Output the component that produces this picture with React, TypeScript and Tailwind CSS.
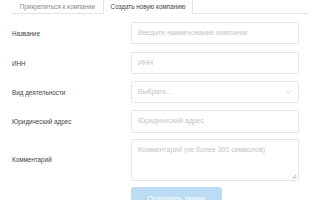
import { ChevronDown } from "lucide-react";

const fields = [
  { label: "Название", placeholder: "Введите наименование компании", mt: "mt-[8px]" },
  { label: "ИНН", placeholder: "ИНН", mt: "mt-[8px]" },
];

export default function App() {
  return (
    <div className="w-[320px] h-[200px] overflow-hidden bg-white px-3 text-[7px] text-[#444] font-['Liberation_Sans',Arial,sans-serif]">
      <div className="flex h-[14px] border-b border-[#e4e4e4] text-[6.3px]">
        <div className="w-[91px] flex items-start justify-center pt-[2px] text-[#888]">
          Прикрепиться к компании
        </div>
        <div className="w-[90px] -mb-px h-[14px] flex items-start justify-center pt-[2px] bg-white border-x border-[#e4e4e4] text-[#444]">
          Создать новую компанию
        </div>
      </div>

      {fields.map((f) => (
        <div key={f.label} className={`flex items-start ${f.mt}`}>
          <div className="w-[119px] pt-[7px] text-[6.3px]">{f.label}</div>
          <div className="w-[168px] h-[22px] border border-[#e6e6e6] rounded-[2px] px-[6px] flex items-center text-[#c4c4c4]">
            {f.placeholder}
          </div>
        </div>
      ))}

      <div className="flex items-start mt-[7px]">
        <div className="w-[119px] pt-[7px] text-[6.3px]">Вид деятельности</div>
        <div className="w-[168px] h-[22px] border border-[#e6e6e6] rounded-[2px] pl-[6px] pr-[6px] flex items-center justify-between text-[#c4c4c4]">
          <span>Выбрать...</span>
          <ChevronDown className="w-[7px] h-[7px] text-[#aaa]" strokeWidth={2} />
        </div>
      </div>

      <div className="flex items-start mt-[7px]">
        <div className="w-[119px] pt-[7px] text-[6.3px]">Юридический адрес</div>
        <div className="w-[168px] h-[23px] border border-[#e6e6e6] rounded-[2px] px-[6px] flex items-center text-[#c4c4c4]">
          Юридический адрес
        </div>
      </div>

      <div className="flex items-start mt-[6px]">
        <div className="w-[119px] pt-[16px] text-[6.3px]">Комментарий</div>
        <div className="relative w-[168px] h-[42px] border border-[#e6e6e6] rounded-[2px] px-[6px] pt-[5px] text-[#c4c4c4]">
          Комментарий (не более 300 символов)
          <svg className="absolute right-[1px] bottom-[1px]" width="5" height="5" viewBox="0 0 5 5">
            <path d="M4.5 0.5 L0.5 4.5 M4.5 2.5 L2.5 4.5" stroke="#999" strokeWidth="0.7" />
          </svg>
        </div>
      </div>

      <div className="flex mt-[6px]">
        <div className="w-[119px]" />
        <div className="w-[91px] h-[24px] rounded-[3px] bg-[#bcdbf4] text-white flex items-center justify-center">
          Отправить заявку
        </div>
      </div>
    </div>
  );
}
